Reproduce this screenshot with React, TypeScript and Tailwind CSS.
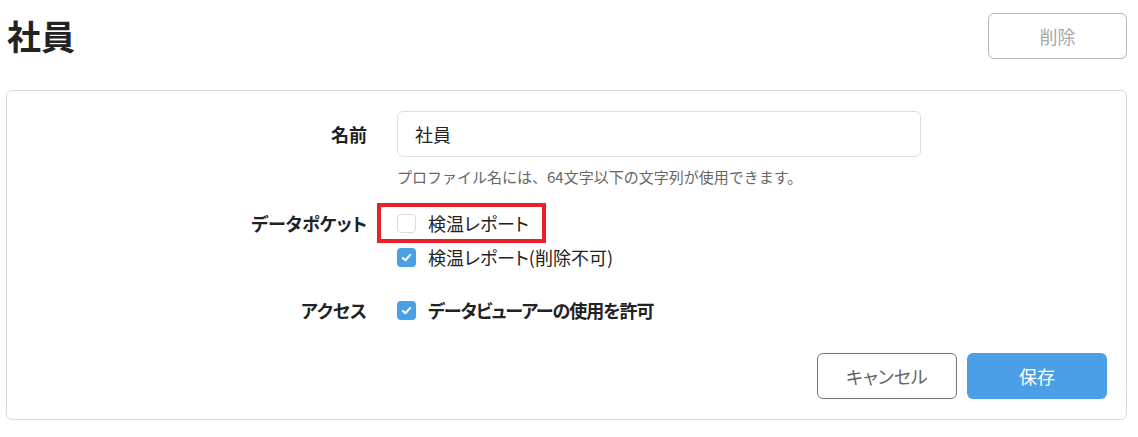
import React from "react";

const font = {
  fontFamily: '"Noto Sans CJK JP", "Noto Sans", sans-serif',
};

function Check({ checked }: { checked: boolean }) {
  if (!checked) {
    return (
      <span className="inline-block w-[19px] h-[19px] rounded-[4px] border border-[#dcdcdc] bg-white shrink-0" />
    );
  }
  return (
    <span className="inline-flex items-center justify-center w-[19px] h-[19px] rounded-[4px] bg-[#4a9fe6] shrink-0">
      <svg width="13" height="13" viewBox="0 0 16 16" fill="none">
        <path d="M3.5 8.5 L6.6 11.4 L12.6 4.8" stroke="white" strokeWidth="2.6" strokeLinecap="round" strokeLinejoin="round" />
      </svg>
    </span>
  );
}

export default function App() {
  return (
    <div className="w-[1138px] h-[437px] bg-white pl-[6px] pr-[11px] text-[#222] [font-feature-settings:'palt']" style={font}>
      <div className="flex items-center justify-between pt-[13px]">
        <h1 className="text-[34px] leading-[46px] font-bold text-[#222] pl-[1px]">社員</h1>
        <button className="w-[139px] h-[46px] rounded-[6px] border border-[#b5b5b5] text-[18px] text-[#a8a8a8] bg-white">
          削除
        </button>
      </div>

      <div className="mt-[31px] border border-[#d9d9d9] rounded-[6px] pt-[20px] pb-[20px] pr-[19px]">
        <div className="flex items-center gap-[30px]">
          <div className="w-[360px] text-right text-[18px] font-bold">名前</div>
          <div className="w-[524px] h-[46px] rounded-[6px] border border-[#dedede] flex items-center pl-[17px] text-[18px] text-[#222]">
            社員
          </div>
        </div>
        <div className="flex gap-[30px] mt-[10px]">
          <div className="w-[360px]" />
          <div className="text-[15px] leading-[20px] text-[#666] [font-feature-settings:normal]">
            プロファイル名には、64文字以下の文字列が使用できます。
          </div>
        </div>

        <div className="flex gap-[30px] mt-[19px]">
          <div className="w-[360px] h-[34px] flex items-center justify-end text-[18px] font-bold">データポケット</div>
          <div className="flex flex-col">
            <div className="relative h-[34px] flex items-center gap-[12px] text-[18px] text-[#222]">
              <Check checked={false} />
              <span>検温レポート</span>
              <span className="absolute left-[-20px] top-[-3px] w-[169px] h-[40px] border-4 border-[#e8202a]" />
            </div>
            <div className="h-[34px] flex items-center gap-[12px] text-[18px] text-[#222]">
              <Check checked={true} />
              <span>検温レポート(削除不可)</span>
            </div>
          </div>
        </div>

        <div className="flex gap-[30px] mt-[19px]">
          <div className="w-[360px] h-[34px] flex items-center justify-end text-[18px] font-bold">アクセス</div>
          <div className="h-[34px] flex items-center gap-[12px] text-[18px] font-bold text-[#222]">
            <Check checked={true} />
            <span className="tracking-[-1px]">データビューアーの使用を許可</span>
          </div>
        </div>

        <div className="flex justify-end gap-[10px] mt-[26px]">
          <button className="w-[140px] h-[46px] rounded-[6px] border border-[#6f747a] text-[18px] text-[#666] bg-white">
            キャンセル
          </button>
          <button className="w-[140px] h-[46px] rounded-[6px] bg-[#4a9fe6] text-[18px] text-white">
            保存
          </button>
        </div>
      </div>
    </div>
  );
}
